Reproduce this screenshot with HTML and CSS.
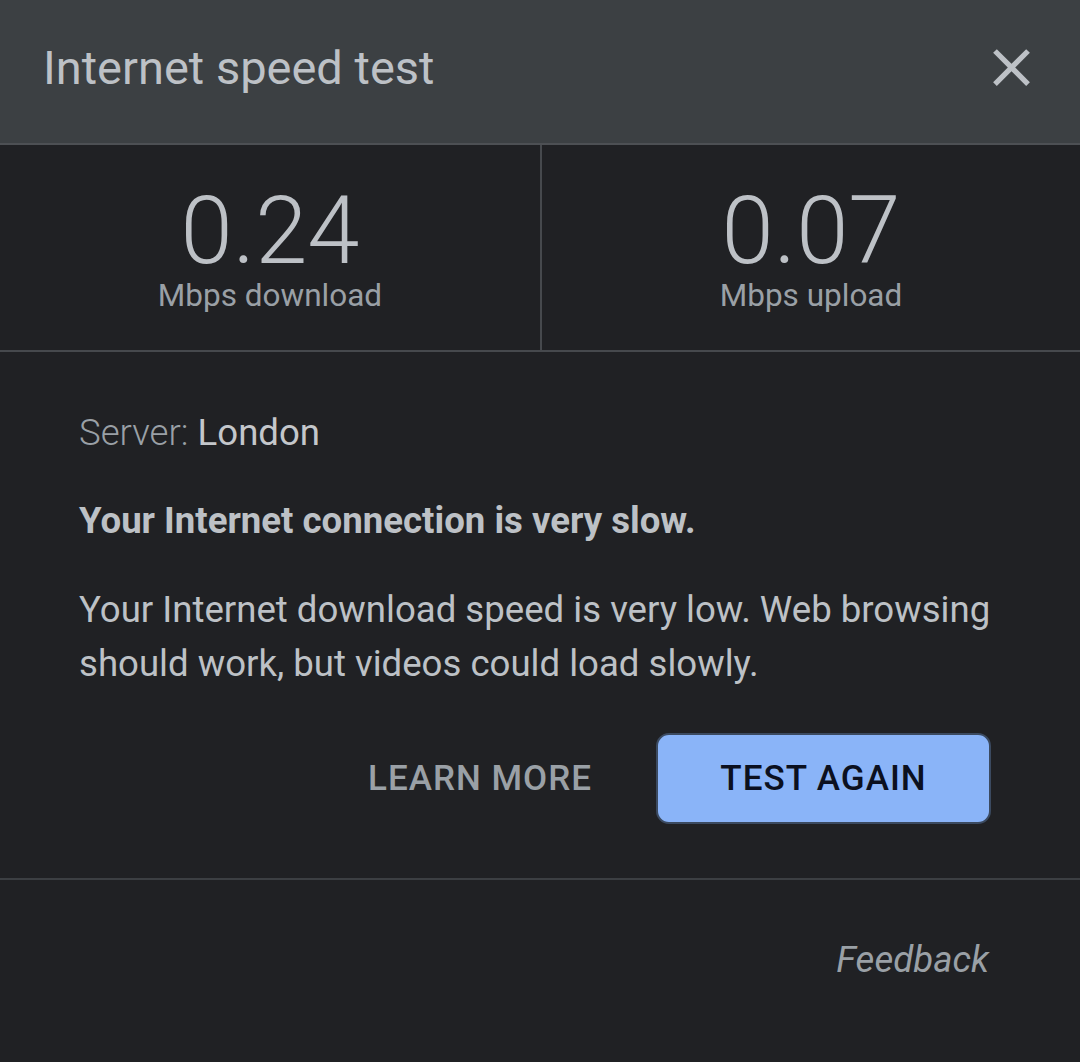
FILE: index.html
```html
<!DOCTYPE html>
<html>
<head>
<meta charset="utf-8">
<link rel="stylesheet" href="styles.css">
</head>
<body>
<div class="dialog">
  <header class="header">
    <h1 class="title">Internet speed test</h1>
    <svg class="close" viewBox="0 0 24 24" width="63" height="63"><path fill="#bdc1c6" d="M19 6.41L17.59 5 12 10.59 6.41 5 5 6.41 10.59 12 5 17.59 6.41 19 12 13.41 17.59 19 19 17.59 13.41 12z"/></svg>
  </header>
  <section class="stats">
    <div class="stat">
      <div class="value">0.24</div>
      <div class="unit">Mbps download</div>
    </div>
    <div class="stat">
      <div class="value">0.07</div>
      <div class="unit">Mbps upload</div>
    </div>
  </section>
  <section class="body">
    <p class="server"><span class="server-label">Server:</span> London</p>
    <p class="verdict">Your Internet connection is very slow.</p>
    <p class="desc">Your Internet download speed is very low. Web browsing should work, but videos could load slowly.</p>
    <div class="actions">
      <span class="btn-text">LEARN MORE</span>
      <span class="btn-primary">TEST AGAIN</span>
    </div>
  </section>
  <footer class="footer">
    <span class="feedback">Feedback</span>
  </footer>
</div>
</body>
</html>
```

FILE: styles.css
```css
html, body {
  margin: 0;
  padding: 0;
  background: #202124;
}
body {
  font-family: Roboto, "Noto Sans", sans-serif;
  color: #bdc1c6;
  width: 1080px;
  height: 1062px;
  overflow: hidden;
}
.dialog {
  display: flex;
  flex-direction: column;
}
.header {
  box-sizing: border-box;
  height: 145px;
  background: #3c4043;
  border-bottom: 2px solid #4d5054;
  display: flex;
  align-items: center;
  justify-content: space-between;
  padding: 0 37px 8px 43px;
}
.title {
  margin: 0;
  font-size: 47px;
  font-weight: 400;
  color: #bdc1c6;
  line-height: 60px;
}
.close {
  display: block;
}
.stats {
  display: grid;
  grid-template-columns: 540px 2px 1fr;
  border-bottom: 2px solid #46494d;
}
.stats .stat:first-child {
  border-right: 2px solid #46494d;
  grid-column: 1 / 3;
}
.stat {
  display: flex;
  flex-direction: column;
  align-items: center;
  padding: 46px 0 36px;
}
.value {
  font-size: 94px;
  font-weight: 300;
  line-height: 80px;
  color: #bdc1c6;
}
.unit {
  margin-top: 7px;
  font-size: 31.5px;
  line-height: 36px;
  color: #9aa0a6;
}
.body {
  padding: 54px 89px 54px 79px;
  border-bottom: 2px solid #3c3f43;
}
.body p {
  margin: 0;
  font-size: 36.6px;
  line-height: 54px;
}
.server {
  color: #c4c7cb;
}
.server-label {
  font-weight: 300;
  color: #9aa0a6;
}
.verdict {
  margin-top: 34px !important;
  font-weight: 700;
}
.desc {
  margin-top: 35px !important;
}
.actions {
  margin-top: 42px;
  display: flex;
  justify-content: flex-end;
  align-items: center;
  gap: 64px;
}
.btn-text {
  font-size: 35px;
  font-weight: 500;
  letter-spacing: 1px;
  color: #9aa0a6;
}
.btn-primary {
  box-sizing: border-box;
  height: 91px;
  width: 335px;
  display: flex;
  align-items: center;
  justify-content: center;
  background: #8ab4f8;
  border: 2px solid #3b4a60;
  border-radius: 13px;
  font-size: 35px;
  font-weight: 500;
  letter-spacing: 1px;
  color: #0b1020;
}
.footer {
  display: flex;
  justify-content: flex-end;
  padding: 53px 91px 0 0;
}
.feedback {
  font-size: 36.6px;
  line-height: 54px;
  font-style: italic;
  color: #9aa0a6;
}
```
